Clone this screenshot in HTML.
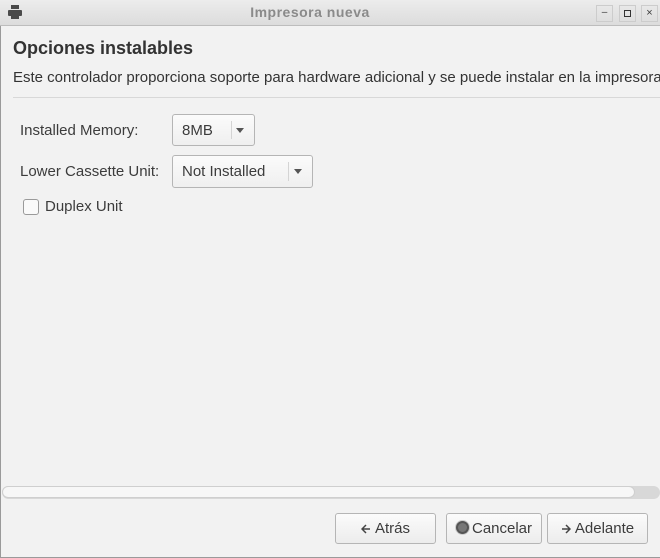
<html><head><style>
body{margin:0;width:660px;height:558px;overflow:hidden;background:#f2f2f2;font-family:"Liberation Sans","DejaVu Sans",sans-serif;position:relative;color:#3c3c3c}
.a{position:absolute}
.title{left:0;top:0;width:660px;height:25px;background:linear-gradient(#ececec,#dcdcdc);border-bottom:1px solid #bdbdbd}
.btn{position:absolute;border:1px solid #b5b5b5;border-radius:3px;background:linear-gradient(#fbfbfb,#ececec);font-size:15px;color:#3c3c3c;box-sizing:border-box;line-height:29px;text-align:center;white-space:nowrap}
.btn svg{vertical-align:-1px;margin-right:4px}
.combo{position:absolute;border:1px solid #b5b5b5;border-radius:3px;background:linear-gradient(#fbfbfb,#efefef);font-size:15px;box-sizing:border-box}
.arr{position:absolute;right:10px;top:13px;width:0;height:0;border-left:4px solid transparent;border-right:4px solid transparent;border-top:5px solid #555}
.sep{position:absolute;top:6px;bottom:6px;width:1px;background:#d4d4d4}
</style></head><body>
<div class="a" style="left:0;top:0;width:1px;height:558px;background:#9a9a9a"></div>
<div class="a" style="left:0;bottom:0;width:660px;height:1px;background:#9a9a9a"></div>
<div class="a title"></div>
<svg class="a" style="left:8px;top:5px" width="14" height="14"><rect x="3" y="0" width="8" height="4" fill="#4a4a4a"/><rect x="0" y="5" width="14" height="6" rx="1" fill="#4a4a4a"/><rect x="3" y="11" width="8" height="3" fill="#4a4a4a"/></svg>
<div class="a" style="left:0;width:620px;top:4px;text-align:center;font-size:14px;font-weight:bold;color:#8a8a8a;letter-spacing:0.5px">Impresora nueva</div>
<div class="a" style="left:596px;top:5px;width:15px;height:15px;border:1px solid #ccc;font-size:10px;text-align:center;line-height:14px">–</div>
<div class="a" style="left:619px;top:5px;width:15px;height:15px;border:1px solid #ccc"><div style="margin:4px;width:5px;height:5px;border:1px solid #333"></div></div>
<div class="a" style="left:641px;top:5px;width:15px;height:15px;border:1px solid #ccc;font-size:11px;text-align:center;line-height:14px">×</div>
<div class="a" style="left:13px;top:38px;font-size:18px;font-weight:bold;color:#333">Opciones instalables</div>
<div class="a" style="left:13px;top:69px;font-size:15px;white-space:nowrap;color:#333">Este controlador proporciona soporte para hardware adicional y se puede instalar en la impresora.</div>
<div class="a" style="left:13px;top:97px;width:647px;height:1px;background:#d8d8d8"></div>
<div class="a" style="left:20px;top:122px;font-size:15px">Installed Memory:</div>
<div class="combo" style="left:172px;top:114px;width:83px;height:32px"><span class="a" style="left:9px;top:7px">8MB</span><div class="sep" style="left:58px"></div><div class="arr"></div></div>
<div class="a" style="left:20px;top:163px;font-size:15px">Lower Cassette Unit:</div>
<div class="combo" style="left:172px;top:155px;width:141px;height:33px"><span class="a" style="left:9px;top:7px">Not Installed</span><div class="sep" style="left:115px"></div><div class="arr"></div></div>
<div class="a" style="left:23px;top:199px;width:14px;height:14px;border:1px solid #9a9a9a;border-radius:3px;background:#fafafa"></div>
<div class="a" style="left:45px;top:198px;font-size:15px">Duplex Unit</div>
<div class="a" style="left:2px;top:486px;width:658px;height:13px;border-radius:7px;background:#d8d8d8"></div>
<div class="a" style="left:2px;top:486px;width:633px;height:12px;border:1px solid #cfcfcf;border-radius:7px;background:#f7f7f7;box-sizing:border-box"></div>
<div class="btn" style="left:335px;top:513px;width:101px;height:31px"><svg width="10" height="10"><path d="M9 5H1M5 1L1 5L5 9" stroke="#444" stroke-width="1.5" fill="none"/></svg>Atrás</div>
<div class="btn" style="left:446px;top:513px;width:96px;height:31px"><span style="display:inline-block;width:9px;height:9px;border-radius:50%;background:#777;border:2px solid #555;box-shadow:0 0 0 1px #ccc;vertical-align:-1px;margin-right:3px"></span>Cancelar</div>
<div class="btn" style="left:547px;top:513px;width:101px;height:31px"><svg width="10" height="10"><path d="M1 5H9M5 1L9 5L5 9" stroke="#444" stroke-width="1.5" fill="none"/></svg>Adelante</div>
</body></html>
